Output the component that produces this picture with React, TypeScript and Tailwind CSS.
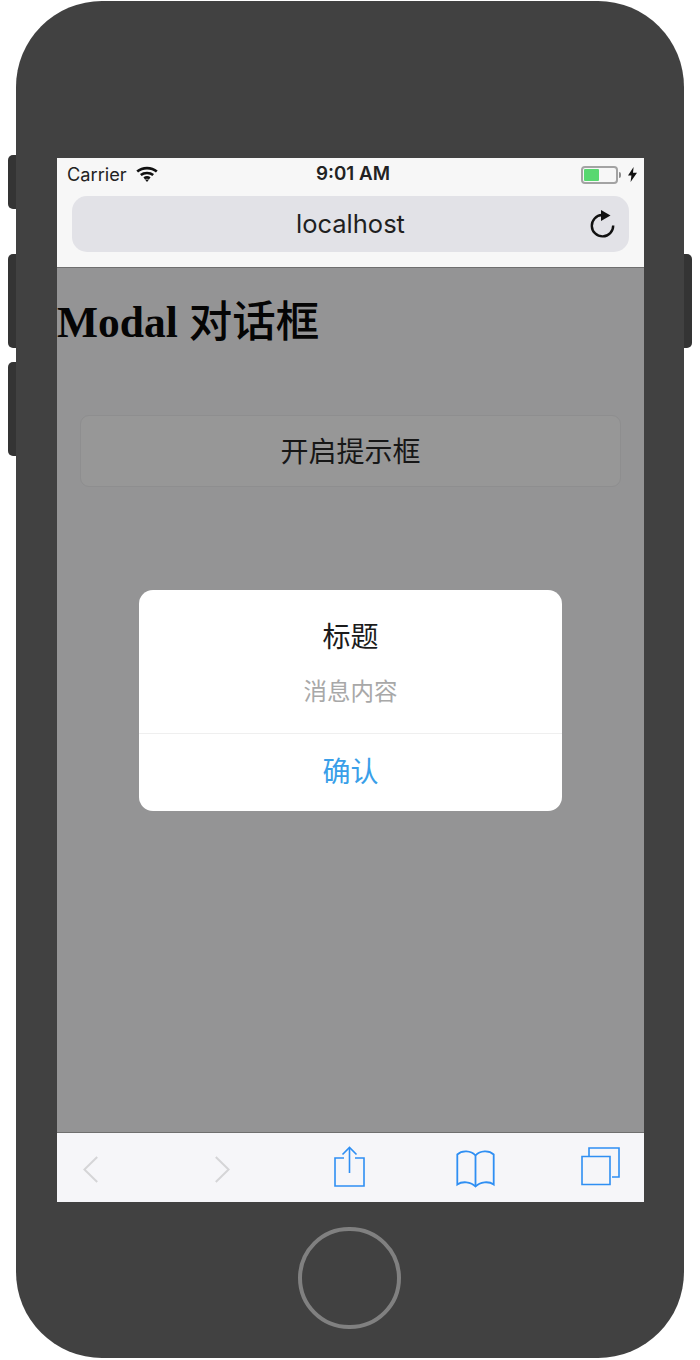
const ui = "font-['Inter','Noto_Sans_CJK_SC',sans-serif]";

function StatusBar() {
  return (
    <div className={`flex h-[38px] items-center pb-[5px] pl-[10px] pr-[7px] ${ui}`}>
      <div className="flex w-[226px] items-center">
        <span className="text-[18.2px] leading-none text-[#222]">Carrier</span>
        <svg className="ml-[9px]" width="22" height="16" viewBox="0 0 22 16" fill="none" stroke="#111" strokeWidth="2.6">
          <path d="M1.2 5.6C6.6.9 15.4.9 20.8 5.6" />
          <path d="M4.8 9.1c3.4-2.8 9-2.8 12.4 0" />
          <path d="M8.2 12.4c1.5-1.1 4.1-1.1 5.6 0" />
          <path d="M11 16l-2-2.4h4z" fill="#111" stroke="none" />
        </svg>
      </div>
      <span className="w-[120px] text-center text-[18.8px] font-semibold leading-none text-[#222]">9:01 AM</span>
      <div className="ml-auto flex items-center">
        <div className="flex h-[18px] w-[37px] items-center rounded-[4px] border-2 border-[#a3a3a3] p-px">
          <div className="h-full w-[15px] rounded-[1px] bg-[#58d870]" />
        </div>
        <div className="ml-px h-[6px] w-[2px] rounded-r-full bg-[#8e8e8e]" />
        <svg className="ml-[7px]" width="9" height="15" viewBox="0 0 9 15" fill="#111">
          <path d="M5.6 0L0 8.6h3.4L2.6 15 9 5.8H5z" />
        </svg>
      </div>
    </div>
  );
}

function AddressBar() {
  return (
    <div className="h-[72px] border-b border-[#6f6f6f] px-[15px]">
      <div className={`relative flex h-[56px] items-center justify-center rounded-[15px] bg-[#e2e2e7] ${ui}`}>
        <span className="text-[25.5px] leading-none text-[#1f1f1f]">localhost</span>
        <svg className="absolute right-[14px] top-[13px]" width="25" height="29" viewBox="0 0 25 29" fill="none">
          <path d="M12 6A10.7 10.7 0 1 0 23.2 16.5" stroke="#111" strokeWidth="2.4" />
          <path d="M11 1l9.500 5.500-9.500 5.500z" fill="#111" />
        </svg>
      </div>
    </div>
  );
}

function Modal() {
  return (
    <div className="absolute inset-0 flex items-center justify-center pt-px">
      <div className={`w-[423px] rounded-[14px] bg-white text-center ${ui}`}>
        <div className="h-[144px] border-b border-[#efefef] pt-[28px]">
          <p className="text-[28px] leading-[38px] text-[#1b1b1b]">标题</p>
          <p className="mt-[20px] text-[23.5px] leading-[32px] text-[#a8a8a8]">消息内容</p>
        </div>
        <button className="block h-[77px] w-full pb-px text-[28px] leading-none text-[#3a9fe9]">确认</button>
      </div>
    </div>
  );
}

function Content() {
  return (
    <div className="relative h-[864px] bg-[#949495]">
      <h1 className="pt-[28px] font-['Liberation_Serif','Noto_Sans_CJK_SC',serif] text-[43.5px] font-bold leading-[52px] text-[#050505]">
        Modal <span className="font-medium">对话框</span>
      </h1>
      <div className="px-[23px] pt-[67px]">
        <button className={`h-[72px] w-[541px] rounded-[9px] border border-[#8e8e8f] bg-[#979797] pt-px text-[28px] leading-none text-[#171717] ${ui}`}>
          开启提示框
        </button>
      </div>
      <Modal />
    </div>
  );
}

function Toolbar() {
  return (
    <div className="flex h-[70px] items-start border-t border-[#6f6f6f] bg-[#f6f6f9] pl-[26px]">
      <svg className="mt-[23px]" width="15" height="27" viewBox="0 0 15 27" fill="none" stroke="#d5d5d7" strokeWidth="2">
        <path d="M14.2 1L1.4 13.5l12.8 12.5" />
      </svg>
      <svg className="ml-[117px] mt-[23px]" width="15" height="27" viewBox="0 0 15 27" fill="none" stroke="#d5d5d7" strokeWidth="2">
        <path d="M.8 1l12.8 12.5L.8 26" />
      </svg>
      <svg className="ml-[104px] mt-[13px]" width="31" height="41" viewBox="0 0 31 41" fill="none" stroke="#2f8ff3" strokeWidth="1.6">
        <path d="M10 12H1v28h29V12h-9" />
        <path d="M15.5 27V2" />
        <path d="M8.5 8.5l7-7 7 7" />
      </svg>
      <svg className="ml-[91px] mt-[16px]" width="39" height="39" viewBox="0 0 39 39" fill="none" stroke="#2f8ff3" strokeWidth="1.8">
        <path d="M19.5 6.5C15 1.5 6 1 1.3 5.5v30C6 32 15 32.5 19.5 37.5 24 32.5 33 32 37.7 35.5v-30C33 1 24 1.5 19.5 6.5z" />
        <path d="M19.5 6.5v31" />
      </svg>
      <svg className="ml-[86px] mt-[14px]" width="39" height="39" viewBox="0 0 39 39" fill="none" stroke="#2f8ff3" strokeWidth="1.6">
        <path d="M8 9V1h30v29h-7" />
        <path d="M1 9.5h28v28H1z" />
      </svg>
    </div>
  );
}

export default function App() {
  return (
    <div className="relative h-[1360px] w-[700px] overflow-hidden bg-white pl-4 pt-px">
      <div className="absolute left-2 top-[155px] h-[54px] w-3 rounded-l-[5px] bg-[#343434]" />
      <div className="absolute left-2 top-[254px] h-[94px] w-3 rounded-l-[5px] bg-[#343434]" />
      <div className="absolute left-2 top-[362px] h-[94px] w-3 rounded-l-[5px] bg-[#343434]" />
      <div className="absolute left-[680px] top-[254px] h-[94px] w-3 rounded-r-[5px] bg-[#343434]" />
      <div className="relative h-[1357px] w-[668px] rounded-[86px] bg-[#414141] pl-[41px] pt-[157px]">
        <div className="w-[587px] bg-[#f7f7f7]">
          <StatusBar />
          <AddressBar />
          <Content />
          <Toolbar />
        </div>
        <div className="ml-[241px] mt-[25px] h-[102px] w-[103px] rounded-full border-[4px] border-[#808080]" />
      </div>
    </div>
  );
}
